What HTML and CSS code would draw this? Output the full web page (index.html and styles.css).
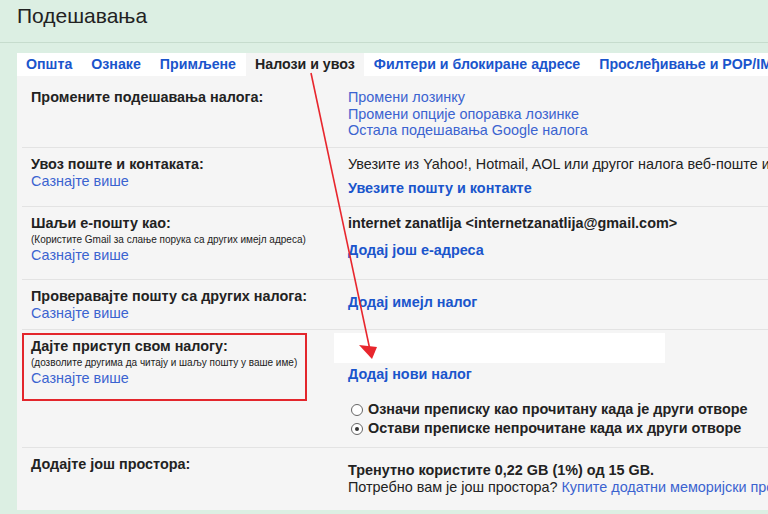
FILE: index.html
```html
<!DOCTYPE html>
<html lang="sr">
<head>
<meta charset="utf-8">
<title>Подешавања</title>
<link rel="stylesheet" href="styles.css">
</head>
<body>
<header class="top">
  <h1 class="title">Подешавања</h1>
</header>
<main class="settings">
  <nav class="tabs">
    <a class="tab">Општа</a>
    <a class="tab">Ознаке</a>
    <a class="tab">Примљене</a>
    <a class="tab active">Налози и увоз</a>
    <a class="tab">Филтери и блокиране адресе</a>
    <a class="tab">Прослеђивање и POP/IMAP</a>
  </nav>
  <div class="panel">
    <section class="row r1">
      <div class="label"><div class="head">Промените подешавања налога:</div></div>
      <div class="value">
        <a class="link line">Промени лозинку</a>
        <a class="link line">Промени опције опоравка лозинке</a>
        <a class="link line">Остала подешавања Google налога</a>
      </div>
    </section>
    <section class="row r2">
      <div class="label">
        <div class="head">Увоз поште и контаката:</div>
        <a class="link more">Сазнајте више</a>
      </div>
      <div class="value">
        <div class="plain">Увезите из Yahoo!, Hotmail, AOL или другог налога веб-поште или POP3 налога.</div>
        <a class="blink gap8">Увезите пошту и контакте</a>
      </div>
    </section>
    <section class="row r3">
      <div class="label">
        <div class="head">Шаљи е-пошту као:</div>
        <div class="note">(Користите Gmail за слање порука са других имејл адреса)</div>
        <a class="link more">Сазнајте више</a>
      </div>
      <div class="value">
        <div class="strong">internet zanatlija &lt;internetzanatlija@gmail.com&gt;</div>
        <a class="blink gap11">Додај још е-адреса</a>
      </div>
    </section>
    <section class="row r4">
      <div class="label">
        <div class="head">Проверавајте пошту са других налога:</div>
        <a class="link more">Сазнајте више</a>
      </div>
      <div class="value">
        <a class="blink gap6">Додај имејл налог</a>
      </div>
    </section>
    <section class="row r5">
      <div class="label">
        <div class="head">Дајте приступ свом налогу:</div>
        <div class="note">(дозволите другима да читају и шаљу пошту у ваше име)</div>
        <a class="link more">Сазнајте више</a>
      </div>
      <div class="mark"></div>
      <div class="value v5">
        <div class="blank"></div>
        <a class="blink gap3">Додај нови налог</a>
        <div class="radios">
          <label class="radio"><span class="dot"></span>Означи преписку као прочитану када је други отворе</label>
          <label class="radio"><span class="dot on"></span>Остави преписке непрочитане када их други отворе</label>
        </div>
      </div>
    </section>
    <section class="row r6">
      <div class="label"><div class="head">Додајте још простора:</div></div>
      <div class="value">
        <div class="strong gap6">Тренутно користите 0,22 GB (1%) од 15 GB.</div>
        <div class="plain tall">Потребно вам је још простора? <a class="link">Купите додатни меморијски простор</a></div>
      </div>
    </section>
  </div>
</main>
<svg class="arrow" width="768" height="514" viewBox="0 0 768 514">
  <line x1="311" y1="73" x2="370" y2="350" stroke="#e8262d" stroke-width="1.6"/>
  <polygon points="372,359 359,345 377,347" fill="#e8262d"/>
</svg>
</body>
</html>
```
FILE: styles.css
```css
html, body {
  margin: 0;
  padding: 0;
}
body {
  background: #dcefe3;
  font-family: "Liberation Sans", Arial, sans-serif;
  font-size: 14.4px;
  color: #222;
  width: 768px;
  height: 514px;
  overflow: hidden;
  position: relative;
}
.top {
  border-bottom: 1px solid #c6dccd;
  padding-left: 17px;
  box-sizing: border-box;
  height: 43px;
}
.title {
  margin: 0;
  padding-top: 3px;
  font-size: 21px;
  line-height: 26px;
  font-weight: normal;
  color: #222;
}
.settings {
  margin: 10px 0 0 17px;
  width: 1000px;
}
.tabs {
  display: flex;
  background: #fff;
  height: 23px;
  align-items: stretch;
}
.tab {
  padding: 0 9px;
  margin-right: 1px;
  line-height: 23px;
  font-size: 14.2px;
  font-weight: bold;
  color: #1a55cc;
  white-space: nowrap;
}
.tab.active {
  background: #f5f5f5;
  color: #222;
}
.panel {
  background: #f5f5f5;
  padding: 5px 0 0 5px;
  height: 434px;
  box-sizing: border-box;
}
.row {
  display: grid;
  grid-template-columns: 326px 1fr;
  border-bottom: 1px solid #e3e3e3;
  padding-top: 8px;
  box-sizing: border-box;
  position: relative;
}
.r1 { height: 67px; }
.r2 { height: 59px; }
.r3 { height: 73px; }
.r4 { height: 50px; }
.r5 { height: 118px; }
.r6 { height: 62px; border-bottom: none; }
.label {
  padding-left: 9px;
}
.head {
  font-weight: bold;
  line-height: 17px;
  white-space: nowrap;
}
.note {
  font-size: 10px;
  line-height: 15px;
  color: #222;
  white-space: nowrap;
}
.link {
  color: #3b63d0;
}
.line, .more {
  display: block;
  line-height: 16.5px;
  white-space: nowrap;
}
.more { line-height: 16px; }
.value {
  white-space: nowrap;
}
.plain {
  line-height: 16px;
}
.tall {
  line-height: 18px;
}
.strong {
  font-weight: bold;
  line-height: 16px;
}
.blink {
  display: block;
  font-weight: bold;
  color: #1a55cc;
  line-height: 16px;
}
.gap3 { margin-top: 3px; }
.gap6 { margin-top: 6px; }
.gap8 { margin-top: 8px; }
.gap11 { margin-top: 11px; }
.v5 {
  margin-top: -5px;
}
.blank {
  background: #fff;
  width: 331px;
  height: 30px;
  margin-left: -14px;
}
.radios {
  margin-top: 18px;
}
.radio {
  display: flex;
  align-items: center;
  font-weight: bold;
  line-height: 19px;
  margin-left: 3px;
}
.dot {
  width: 12px;
  height: 12px;
  border: 1px solid #666;
  border-radius: 50%;
  background: #fff;
  margin-right: 5px;
  box-sizing: border-box;
  position: relative;
  flex: none;
}
.dot.on::after {
  content: "";
  position: absolute;
  left: 3px;
  top: 3px;
  width: 4px;
  height: 4px;
  border-radius: 50%;
  background: #333;
}
.mark {
  position: absolute;
  left: 0;
  top: 3px;
  width: 285px;
  height: 68px;
  border: 2px solid #e3262c;
  box-sizing: border-box;
}
.arrow {
  position: absolute;
  left: 0;
  top: 0;
  pointer-events: none;
}
```
